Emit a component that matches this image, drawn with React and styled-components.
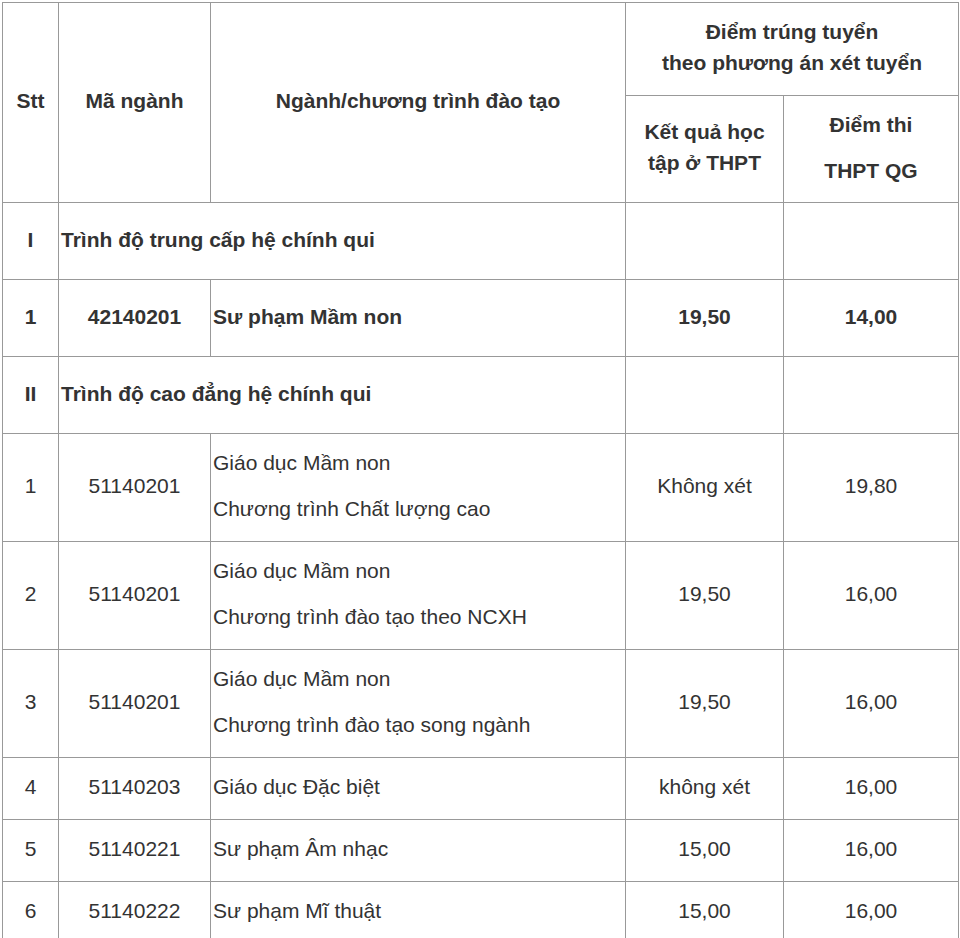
import React from 'react';
import styled, { createGlobalStyle } from 'styled-components';

const GlobalStyle = createGlobalStyle`
  body {
    margin: 0;
    background: #ffffff;
    font-family: "Liberation Sans", Arial, sans-serif;
    color: #333333;
  }
`;

const Page = styled.div`
  padding: 2px 0 0 2px;
`;

const Table = styled.table`
  width: 956px;
  border-collapse: collapse;
  table-layout: fixed;
  font-size: 21px;
  line-height: 31px;
  color: #333333;
`;

const Row = styled.tr`
  height: ${(p) => p.$h}px;
`;

const Th = styled.th`
  border: 1px solid #999999;
  padding: 8px 2px 12px;
  font-weight: bold;
  text-align: center;
  vertical-align: middle;
`;

const Td = styled.td`
  border: 1px solid #999999;
  padding: 0 2px 4px;
  font-weight: ${(p) => (p.$bold ? 'bold' : 'normal')};
  text-align: ${(p) => p.$align || 'center'};
  vertical-align: middle;
`;

const Line = styled.p`
  margin: 0;

  & + & {
    margin-top: 15px;
  }
`;

const sections = [
  {
    no: 'I',
    title: 'Trình độ trung cấp hệ chính qui',
    rows: [
      { no: '1', code: '42140201', name: ['Sư phạm Mầm non'], a: '19,50', b: '14,00', bold: true, h: 77 },
    ],
  },
  {
    no: 'II',
    title: 'Trình độ cao đẳng hệ chính qui',
    rows: [
      { no: '1', code: '51140201', name: ['Giáo dục Mầm non', 'Chương trình Chất lượng cao'], a: 'Không xét', b: '19,80', h: 108 },
      { no: '2', code: '51140201', name: ['Giáo dục Mầm non', 'Chương trình đào tạo theo NCXH'], a: '19,50', b: '16,00', h: 108 },
      { no: '3', code: '51140201', name: ['Giáo dục Mầm non', 'Chương trình đào tạo song ngành'], a: '19,50', b: '16,00', h: 108 },
      { no: '4', code: '51140203', name: ['Giáo dục Đặc biệt'], a: 'không xét', b: '16,00', h: 62 },
      { no: '5', code: '51140221', name: ['Sư phạm Âm nhạc'], a: '15,00', b: '16,00', h: 62 },
      { no: '6', code: '51140222', name: ['Sư phạm Mĩ thuật'], a: '15,00', b: '16,00', h: 62 },
    ],
  },
];

export default function App() {
  return (
    <Page>
      <GlobalStyle />
      <Table>
        <colgroup>
          <col style={{ width: 56 }} />
          <col style={{ width: 152 }} />
          <col style={{ width: 415 }} />
          <col style={{ width: 158 }} />
          <col style={{ width: 175 }} />
        </colgroup>
        <thead>
          <Row $h={93}>
            <Th rowSpan={2}>Stt</Th>
            <Th rowSpan={2}>Mã ngành</Th>
            <Th rowSpan={2}>Ngành/chương trình đào tạo</Th>
            <Th colSpan={2}>
              Điểm trúng tuyển
              <br />
              theo phương án xét tuyển
            </Th>
          </Row>
          <Row $h={107}>
            <Th>Kết quả học tập ở THPT</Th>
            <Th>
              <Line>Điểm thi</Line>
              <Line>THPT QG</Line>
            </Th>
          </Row>
        </thead>
        <tbody>
          {sections.map((s) => (
            <React.Fragment key={s.no}>
              <Row $h={77}>
                <Td $bold>{s.no}</Td>
                <Td $bold $align="left" colSpan={2}>{s.title}</Td>
                <Td />
                <Td />
              </Row>
              {s.rows.map((r, i) => (
                <Row key={i} $h={r.h}>
                  <Td $bold={r.bold}>{r.no}</Td>
                  <Td $bold={r.bold}>{r.code}</Td>
                  <Td $bold={r.bold} $align="left">
                    {r.name.map((n) => (
                      <Line key={n}>{n}</Line>
                    ))}
                  </Td>
                  <Td $bold={r.bold}>{r.a}</Td>
                  <Td $bold={r.bold}>{r.b}</Td>
                </Row>
              ))}
            </React.Fragment>
          ))}
        </tbody>
      </Table>
    </Page>
  );
}
